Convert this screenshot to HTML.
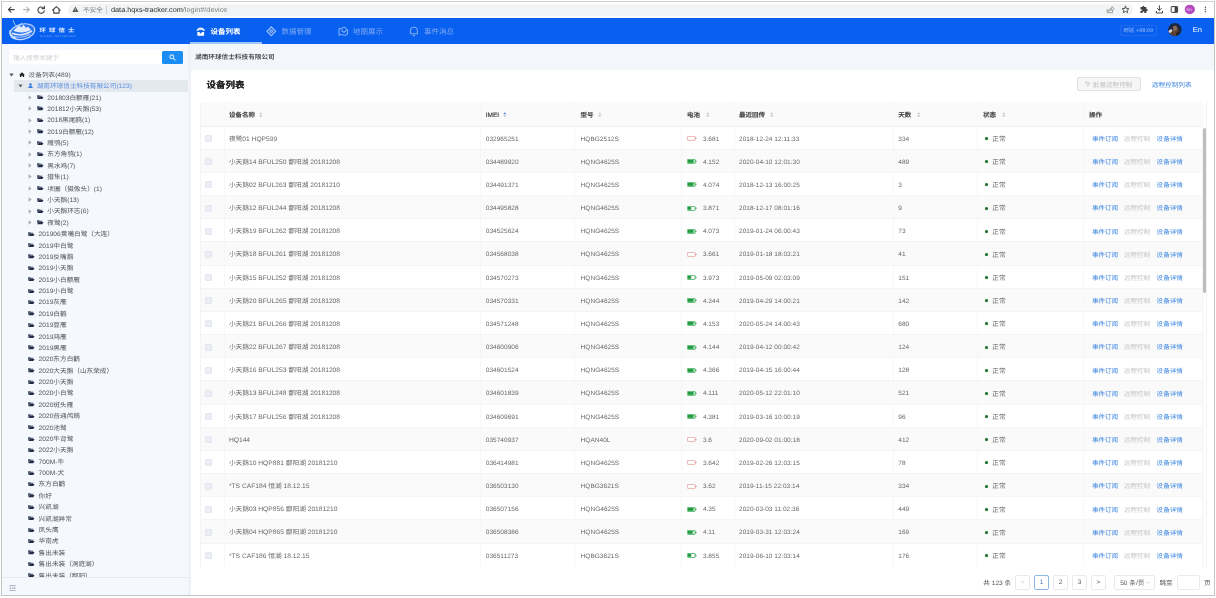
<!DOCTYPE html><html lang="zh-CN"><head><meta charset="utf-8"><title>设备列表</title><style>
*{box-sizing:border-box;margin:0;padding:0}
html,body{width:1216px;height:598px;overflow:hidden;background:#fff}
body{font-family:"Liberation Sans","Noto Sans CJK SC",sans-serif;font-size:6.6px;color:#444;position:relative;filter:blur(.5px);text-rendering:geometricPrecision}
.abs{position:absolute}
.t{position:absolute;white-space:nowrap;line-height:10px;height:10px}
#frame{position:absolute;left:1px;top:1px;width:1214px;height:595px;border:1px solid #c4c4c4;overflow:hidden;background:#fff}
#chrome{position:absolute;left:0;top:0;width:1216px;height:18px;background:#fff}
#omni{position:absolute;left:67.500px;top:3.800px;width:1065.500px;height:12.200px;border-radius:6.100px;background:#f1f3f4}
#hdr{position:absolute;left:2px;top:18px;width:1212px;height:25.5px;background:#0860f0}
#side{position:absolute;left:2px;top:43.5px;width:186px;height:552px;background:#f5f8fd;overflow:hidden}
#sideline{position:absolute;left:188px;top:43.5px;width:2.6px;height:552px;background:#eff3f9}
#crumb{position:absolute;left:190.6px;top:43.5px;width:1023.4px;height:26.5px;background:#f3f7fc}
#card{position:absolute;left:190.6px;top:70px;width:1023.4px;height:526px;background:#fff}
.tree{margin-top:1px;position:absolute;left:0;height:11.36px;line-height:11.36px;white-space:nowrap;color:#50555f;font-size:6.65px}
.row{position:absolute;left:200px;width:1002px;height:23.17px;border-bottom:1px solid #f4f4f4}
.row.alt{background:#fafafa}
.cell{margin-top:1px;position:absolute;top:0;height:23.5px;line-height:23.5px;white-space:nowrap;font-size:6.55px;color:#6a6a6a}
.vl{position:absolute;width:1px;background:#f7f7f7}
.th{margin-top:1.5px;position:absolute;top:0;height:24px;line-height:24px;white-space:nowrap;font-size:6.5px;color:#333;font-weight:500;-webkit-text-stroke:.18px #444}
.t,.tree,.cell,.th{transform:scaleY(.96)}
.lnk{color:#3b86e0}
.cj{top:.25px}
.dis{color:#c4c4c4}
.pg{position:absolute;top:575.2px;height:14.4px;border:1px solid #eaeaea;border-radius:2px;background:#fff;text-align:center;line-height:13.2px;font-size:6.6px;color:#606060}
</style></head><body>
<div id="chrome">
<div id="omni"></div>
<svg class="abs" style="left:6px;top:4px" width="60" height="12" viewBox="0 0 60 12" fill="none" stroke="#444" stroke-width="1.1" stroke-linecap="round" stroke-linejoin="round">
<path d="M8.2 5.6H2.6M5 3.1L2.4 5.6L5 8.1"/>
<path d="M17.6 5.6h5.6M20.8 3.1l2.6 2.5l-2.6 2.5" stroke="#b5b5b5"/>
<g transform="translate(-2.6 0)"><path d="M40.3 4.2A3.200 3.200 0 1 0 40.9 6.800"/><path d="M41 2.200v2.400h-2.400" /></g>
<g transform="translate(-4.6 0)"><path d="M51.200 6.200L55 2.600l3.800 3.600M52.300 5.400v3.700h5.400V5.400"/></g>
</svg>
<svg class="abs" style="left:72.200px;top:6.400px" width="6.800" height="6.200" viewBox="0 0 9 8.400" preserveAspectRatio="none"><path d="M4.5 0.8L8.6 8H0.4Z" fill="#5a5a5a"/><path d="M4.5 3.4v2.4M4.5 6.6v.6" stroke="#f1f3f4" stroke-width=".8"/></svg>
<div class="t" style="left:83px;top:5.5px;font-size:6.6px;color:#777">不安全</div>
<div class="abs" style="left:105.700px;top:5.500px;width:1px;height:8px;background:#cfcfcf"></div>
<div class="t" style="left:111px;top:4.5px;font-size:7.300px;color:#2a2a2a">data.hqxs-tracker.com<span style="color:#808080">/login#/device</span></div>
<svg class="abs" style="left:1104px;top:3px" width="108" height="13" viewBox="0 0 108 13" fill="none" stroke-linecap="round" stroke-linejoin="round">
<g stroke="#8a8a8a" stroke-width=".8"><path d="M3.2 6.3v3.4h5.4V7.6M4.6 8.2c.3-2 1.6-3 3.4-3.1V3.6L10.2 5.8 8 7.9V6.6C6.600 6.600 5.500 7.100 4.600 8.200Z"/></g>
<path d="M21.5 3.3l1 2.200 2.400.25-1.800 1.600.5 2.350-2.100-1.250-2.100 1.250.5-2.350-1.800-1.600 2.400-.25Z" stroke="#444" stroke-width=".9"/>
<g transform="translate(35.700 2.300) scale(.355)"><path d="M20.500 11H19V7c0-1.100-.9-2-2-2h-4V3.500C13 2.120 11.880 1 10.500 1S8 2.120 8 3.500V5H4c-1.100 0-1.990.9-1.990 2v3.800H3.500c1.490 0 2.700 1.210 2.700 2.700s-1.210 2.700-2.700 2.700H2V20c0 1.100.9 2 2 2h3.800v-1.500c0-1.490 1.210-2.700 2.700-2.700 1.490 0 2.700 1.210 2.700 2.700V22H17c1.100 0 2-.9 2-2v-4h1.500c1.380 0 2.500-1.120 2.500-2.500S21.880 11 20.500 11z" fill="#444"/></g>
<path d="M55.400 2.800v4.400M53.500 5.500l1.900 1.900 1.900-1.900M52.300 8.300v1.700h6.200V8.300" stroke="#444" stroke-width="1"/>
<rect x="67.200" y="3.600" width="6.400" height="5.800" rx=".8" stroke="#444" stroke-width="1"/><rect x="70.600" y="3.600" width="3" height="5.800" fill="#444"/>
<ellipse cx="85.800" cy="6.400" rx="5.100" ry="4.750" fill="#b44ac0"/>
<circle cx="101.400" cy="4.200" r=".75" fill="#555"/><circle cx="101.400" cy="6.500" r=".75" fill="#555"/><circle cx="101.400" cy="8.800" r=".75" fill="#555"/>
</svg>
<div class="t" style="left:1186.500px;top:4.500px;font-size:4.600px;color:#f3d8f5;letter-spacing:0">hn</div>
</div>
<div id="hdr"></div>
<svg class="abs" style="left:4px;top:16px" width="36" height="30" viewBox="0 0 36 30" fill="none">
<ellipse cx="18.400" cy="15.700" rx="12.500" ry="7.600" transform="rotate(-13 18.4 15.7)" fill="#2a74f2" stroke="#c4d9fb" stroke-width="1.200"/>
<path d="M9.500 14.800c2-2.600 4-4.300 6.200-5.300l1.500 2.100 2.300-2.900 2.500 3.300 1.900-1.500 3.100 3.600c-5 2.600-12 3.400-17.500.7Z" fill="#e2ecfd"/>
<path d="M8 17.300c5.500 2.300 13 1.700 20-2.300" stroke="#dce8fc" stroke-width="1.500"/>
<path d="M9.600 20.300c5 1.700 11 1 16.500-2.100" stroke="#a9c6f9" stroke-width="1.100"/>
<path d="M6.300 14.200c-1 3.800 1.400 7.200 6 8.300" stroke="#cfe0fb" stroke-width="1.700"/>
<path d="M9.200 4.300c.6 3.200 2 5 4.400 6.800M18.400 7.200c-1.800.8-3.400 2-4.800 3.900" stroke="#c4d9fb" stroke-width=".9"/>
</svg>
<div class="t" style="left:39.600px;top:26px;font-size:6.400px;font-weight:900;color:#d3e3fc;letter-spacing:3.100px;transform:scaleY(.82);transform-origin:0 50%">环球信士</div>
<div class="t" style="left:39.800px;top:33.500px;font-size:2.700px;color:#78a5f6;letter-spacing:.480px;line-height:6px;height:6px">GLOBAL MESSENGER</div>
<div class="abs" style="left:190px;top:41.700px;width:71.800px;height:2.300px;background:#a0c5fa"></div>
<svg class="abs" style="left:195.600px;top:26.600px" width="9.400" height="9.400" viewBox="0 0 10 10"><path d="M.6 4.200C.6 2 2.500.6 5 .6S9.400 2 9.400 4.200L7.600 4.200 7 3.200H3L2.400 4.200Z" fill="#dce8fd"/><path d="M1.400 5.300H8.600V8.900a.5.500 0 0 1-.5.500H1.900a.5.500 0 0 1-.5-.5Z" fill="#fff"/><rect x="4" y="5.300" width="2" height="1.500" fill="#0860f0"/></svg>
<div class="t" style="left:210.600px;top:27.300px;font-size:7.500px;font-weight:700;color:#fff">设备列表</div>
<svg class="abs" style="left:266px;top:26.300px" width="10.600" height="10.600" viewBox="0 0 10.600 10.600" fill="none" stroke="#98bbf8" stroke-width="1.250"><path d="M5.300 1L9.600 5.300 5.300 9.600 1 5.300Z"/><circle cx="5.300" cy="5.300" r="1.200"/></svg>
<div class="t" style="left:281.600px;top:27.300px;font-size:7.500px;color:#7fa9f5">数据管理</div>
<svg class="abs" style="left:337.800px;top:26.300px" width="10.400" height="10.400" viewBox="0 0 10.400 10.400" fill="none" stroke="#8fb4f6" stroke-width="1" stroke-linejoin="round"><path d="M3 2.400H1V9.400L3.600 8.400 6.800 9.400 9.400 8.400V3.200"/><circle cx="6" cy="3.600" r="2.400"/><path d="M6 6v1"/></svg>
<div class="t" style="left:352.900px;top:27.300px;font-size:7.500px;color:#7fa9f5">地图展示</div>
<svg class="abs" style="left:409.300px;top:26.200px" width="9.800" height="10.600" viewBox="0 0 9.800 10.600" fill="none" stroke="#8fb4f6" stroke-width="1" stroke-linejoin="round"><path d="M1.400 7.800V4.600a3.500 3.500 0 0 1 7 0V7.800Z"/><path d="M3.800 9.600h2.200"/></svg>
<div class="t" style="left:424.100px;top:27.300px;font-size:7.500px;color:#7fa9f5">事件消息</div>
<div class="abs" style="left:1120.200px;top:25.100px;width:37.300px;height:10.700px;border:1px solid #2468ee;border-radius:1px"></div>
<div class="t" style="left:1123.400px;top:25.500px;font-size:5.500px;font-weight:700;color:#7aa6f6">时区 +08:00</div>
<svg class="abs" style="left:1168.100px;top:22.900px" width="13.800" height="13.100" viewBox="0 0 14 14" preserveAspectRatio="none"><defs><clipPath id="av"><circle cx="7" cy="7" r="6.900"/></clipPath></defs><g clip-path="url(#av)"><rect width="14" height="14" fill="#1c2746"/><path d="M0 9l3-2 2 1 2-4 3 1 1 5-2 4H3Z" fill="#5a4030"/><path d="M5 4.500c1-2 3.500-2 4.200 0l-.5 3.500-3 .5Z" fill="#8a6a50"/><path d="M0 8.500l3.500-2 1 2L2 11Z" fill="#d8d8e0"/><path d="M9 9l2.500 1.500L12 14H8Z" fill="#222"/></g></svg>
<div class="t" style="left:1192.800px;top:25px;font-size:7.600px;color:#fff">En</div>
<div id="side">
<div class="abs" style="left:6.500px;top:6.500px;width:153px;height:13.800px;background:#fff;border-radius:1.500px 0 0 1.500px"></div>
<div class="t" style="left:11.200px;top:10.400px;font-size:6.500px;color:#cdd0d5">输入搜索关键字</div>
<div class="abs" style="left:159.500px;top:7px;width:21.600px;height:13.800px;background:#1b8df4;border-radius:1.500px"></div>
<svg class="abs" style="left:166.800px;top:10.600px" width="7" height="7" viewBox="0 0 7 7" fill="none" stroke="#cfe6fd" stroke-width="1.100" stroke-linecap="round"><circle cx="2.800" cy="2.800" r="1.900"/><path d="M4.300 4.300L6.200 6.200"/></svg>
<div class="abs" style="left:11.500px;top:36.600px;width:175px;height:11.600px;background:#e4e8ef"></div>
<svg class="abs" style="left:6.9px;top:29.0px" width="5" height="4" viewBox="0 0 5 4"><path d="M.3.600h4.400L2.500 3.600Z" fill="#555"/></svg>
<svg class="abs" style="left:16.7px;top:28.1px" width="6" height="5.600" viewBox="0 0 6 5.600"><path d="M3 .2L5.900 2.900H5.100V5.400H3.700V3.700H2.300V5.400H.9V2.900H.1Z" fill="#222"/></svg>
<div class="tree" style="left:26.6px;top:25.31px">设备列表(489)</div>
<svg class="abs" style="left:16.0px;top:40.4px" width="5" height="4" viewBox="0 0 5 4"><path d="M.3.600h4.400L2.500 3.600Z" fill="#666"/></svg>
<svg class="abs" style="left:26.2px;top:39.5px" width="5" height="5.400" viewBox="0 0 5 5.400"><circle cx="2.500" cy="1.500" r="1.300" fill="#3b7de0"/><path d="M.2 5.300C.2 3.600 1.200 3 2.500 3S4.800 3.600 4.800 5.300Z" fill="#3b7de0"/></svg>
<div class="tree" style="left:34.7px;top:36.69px;color:#5b8fe0">湖南环球信士科技有限公司(123)</div>
<svg class="abs" style="left:25.5px;top:51.3px" width="4" height="5" viewBox="0 0 4 5"><path d="M.600.300v4.400L3.600 2.500Z" fill="#a9adb5"/></svg>
<svg class="abs" style="left:35.3px;top:51.6px" width="6.600" height="4.400" viewBox="0 0 6.600 4.400"><path d="M.2.200h1.900l.6.600h2.600v.9H1.500L.2 3.700Z" fill="#2f3a55"/><path d="M1.600 1.900h4.900L5.300 4.200H.3Z" fill="#232d47"/></svg>
<div class="tree" style="left:45.3px;top:48.07px">201803白额雁(21)</div>
<svg class="abs" style="left:25.5px;top:62.6px" width="4" height="5" viewBox="0 0 4 5"><path d="M.600.300v4.400L3.600 2.500Z" fill="#a9adb5"/></svg>
<svg class="abs" style="left:35.3px;top:62.9px" width="6.600" height="4.400" viewBox="0 0 6.600 4.400"><path d="M.2.200h1.900l.6.600h2.600v.9H1.500L.2 3.700Z" fill="#2f3a55"/><path d="M1.600 1.900h4.900L5.300 4.200H.3Z" fill="#232d47"/></svg>
<div class="tree" style="left:45.3px;top:59.45px">201812小天鹅(53)</div>
<svg class="abs" style="left:25.5px;top:74.0px" width="4" height="5" viewBox="0 0 4 5"><path d="M.600.300v4.400L3.600 2.500Z" fill="#a9adb5"/></svg>
<svg class="abs" style="left:35.3px;top:74.3px" width="6.600" height="4.400" viewBox="0 0 6.600 4.400"><path d="M.2.200h1.900l.6.600h2.600v.9H1.500L.2 3.700Z" fill="#2f3a55"/><path d="M1.600 1.900h4.900L5.300 4.200H.3Z" fill="#232d47"/></svg>
<div class="tree" style="left:45.3px;top:70.83px">2018黑尾鸥(1)</div>
<svg class="abs" style="left:25.5px;top:85.4px" width="4" height="5" viewBox="0 0 4 5"><path d="M.600.300v4.400L3.600 2.500Z" fill="#a9adb5"/></svg>
<svg class="abs" style="left:35.3px;top:85.7px" width="6.600" height="4.400" viewBox="0 0 6.600 4.400"><path d="M.2.200h1.900l.6.600h2.600v.9H1.500L.2 3.700Z" fill="#2f3a55"/><path d="M1.600 1.900h4.900L5.300 4.200H.3Z" fill="#232d47"/></svg>
<div class="tree" style="left:45.3px;top:82.21px">2019白额雁(12)</div>
<svg class="abs" style="left:25.5px;top:96.8px" width="4" height="5" viewBox="0 0 4 5"><path d="M.600.300v4.400L3.600 2.500Z" fill="#a9adb5"/></svg>
<svg class="abs" style="left:35.3px;top:97.1px" width="6.600" height="4.400" viewBox="0 0 6.600 4.400"><path d="M.2.200h1.900l.6.600h2.600v.9H1.500L.2 3.700Z" fill="#2f3a55"/><path d="M1.600 1.900h4.900L5.300 4.200H.3Z" fill="#232d47"/></svg>
<div class="tree" style="left:45.3px;top:93.59px">雕鸮(5)</div>
<svg class="abs" style="left:25.5px;top:108.2px" width="4" height="5" viewBox="0 0 4 5"><path d="M.600.300v4.400L3.600 2.500Z" fill="#a9adb5"/></svg>
<svg class="abs" style="left:35.3px;top:108.5px" width="6.600" height="4.400" viewBox="0 0 6.600 4.400"><path d="M.2.200h1.900l.6.600h2.600v.9H1.500L.2 3.700Z" fill="#2f3a55"/><path d="M1.600 1.900h4.900L5.300 4.200H.3Z" fill="#232d47"/></svg>
<div class="tree" style="left:45.3px;top:104.97px">东方角鸮(1)</div>
<svg class="abs" style="left:25.5px;top:119.5px" width="4" height="5" viewBox="0 0 4 5"><path d="M.600.300v4.400L3.600 2.500Z" fill="#a9adb5"/></svg>
<svg class="abs" style="left:35.3px;top:119.8px" width="6.600" height="4.400" viewBox="0 0 6.600 4.400"><path d="M.2.200h1.900l.6.600h2.600v.9H1.500L.2 3.700Z" fill="#2f3a55"/><path d="M1.600 1.900h4.900L5.300 4.200H.3Z" fill="#232d47"/></svg>
<div class="tree" style="left:45.3px;top:116.35px">黑水鸡(7)</div>
<svg class="abs" style="left:25.5px;top:130.9px" width="4" height="5" viewBox="0 0 4 5"><path d="M.600.300v4.400L3.600 2.500Z" fill="#a9adb5"/></svg>
<svg class="abs" style="left:35.3px;top:131.2px" width="6.600" height="4.400" viewBox="0 0 6.600 4.400"><path d="M.2.200h1.900l.6.600h2.600v.9H1.500L.2 3.700Z" fill="#2f3a55"/><path d="M1.600 1.900h4.900L5.300 4.200H.3Z" fill="#232d47"/></svg>
<div class="tree" style="left:45.3px;top:127.73px">猎隼(1)</div>
<svg class="abs" style="left:25.5px;top:142.3px" width="4" height="5" viewBox="0 0 4 5"><path d="M.600.300v4.400L3.600 2.500Z" fill="#a9adb5"/></svg>
<svg class="abs" style="left:35.3px;top:142.6px" width="6.600" height="4.400" viewBox="0 0 6.600 4.400"><path d="M.2.200h1.900l.6.600h2.600v.9H1.500L.2 3.700Z" fill="#2f3a55"/><path d="M1.600 1.900h4.900L5.300 4.200H.3Z" fill="#232d47"/></svg>
<div class="tree" style="left:45.3px;top:139.11px">项圈（摄像头）(1)</div>
<svg class="abs" style="left:25.5px;top:153.7px" width="4" height="5" viewBox="0 0 4 5"><path d="M.600.300v4.400L3.600 2.500Z" fill="#a9adb5"/></svg>
<svg class="abs" style="left:35.3px;top:154.0px" width="6.600" height="4.400" viewBox="0 0 6.600 4.400"><path d="M.2.200h1.900l.6.600h2.600v.9H1.500L.2 3.700Z" fill="#2f3a55"/><path d="M1.600 1.900h4.900L5.300 4.200H.3Z" fill="#232d47"/></svg>
<div class="tree" style="left:45.3px;top:150.49px">小天鹅(13)</div>
<svg class="abs" style="left:25.5px;top:165.1px" width="4" height="5" viewBox="0 0 4 5"><path d="M.600.300v4.400L3.600 2.500Z" fill="#a9adb5"/></svg>
<svg class="abs" style="left:35.3px;top:165.4px" width="6.600" height="4.400" viewBox="0 0 6.600 4.400"><path d="M.2.200h1.900l.6.600h2.600v.9H1.500L.2 3.700Z" fill="#2f3a55"/><path d="M1.600 1.900h4.900L5.300 4.200H.3Z" fill="#232d47"/></svg>
<div class="tree" style="left:45.3px;top:161.87px">小天鹅环志(6)</div>
<svg class="abs" style="left:25.5px;top:176.4px" width="4" height="5" viewBox="0 0 4 5"><path d="M.600.300v4.400L3.600 2.500Z" fill="#a9adb5"/></svg>
<svg class="abs" style="left:35.3px;top:176.7px" width="6.600" height="4.400" viewBox="0 0 6.600 4.400"><path d="M.2.200h1.900l.6.600h2.600v.9H1.500L.2 3.700Z" fill="#2f3a55"/><path d="M1.600 1.900h4.900L5.300 4.200H.3Z" fill="#232d47"/></svg>
<div class="tree" style="left:45.3px;top:173.25px">夜鹭(2)</div>
<svg class="abs" style="left:26.3px;top:188.1px" width="6.600" height="4.400" viewBox="0 0 6.600 4.400"><path d="M.2.200h1.900l.6.600h2.600v.9H1.500L.2 3.700Z" fill="#2f3a55"/><path d="M1.600 1.900h4.900L5.300 4.200H.3Z" fill="#232d47"/></svg>
<div class="tree" style="left:36.6px;top:184.63px">201906黄嘴白鹭（大连）</div>
<svg class="abs" style="left:26.3px;top:199.5px" width="6.600" height="4.400" viewBox="0 0 6.600 4.400"><path d="M.2.200h1.900l.6.600h2.600v.9H1.500L.2 3.700Z" fill="#2f3a55"/><path d="M1.600 1.900h4.900L5.300 4.200H.3Z" fill="#232d47"/></svg>
<div class="tree" style="left:36.6px;top:196.01px">2019中白鹭</div>
<svg class="abs" style="left:26.3px;top:210.9px" width="6.600" height="4.400" viewBox="0 0 6.600 4.400"><path d="M.2.200h1.900l.6.600h2.600v.9H1.500L.2 3.700Z" fill="#2f3a55"/><path d="M1.600 1.900h4.900L5.300 4.200H.3Z" fill="#232d47"/></svg>
<div class="tree" style="left:36.6px;top:207.39px">2019反嘴鹬</div>
<svg class="abs" style="left:26.3px;top:222.3px" width="6.600" height="4.400" viewBox="0 0 6.600 4.400"><path d="M.2.200h1.900l.6.600h2.600v.9H1.500L.2 3.700Z" fill="#2f3a55"/><path d="M1.600 1.900h4.900L5.300 4.200H.3Z" fill="#232d47"/></svg>
<div class="tree" style="left:36.6px;top:218.77px">2019小天鹅</div>
<svg class="abs" style="left:26.3px;top:233.6px" width="6.600" height="4.400" viewBox="0 0 6.600 4.400"><path d="M.2.200h1.900l.6.600h2.600v.9H1.500L.2 3.700Z" fill="#2f3a55"/><path d="M1.600 1.900h4.900L5.300 4.200H.3Z" fill="#232d47"/></svg>
<div class="tree" style="left:36.6px;top:230.15px">2019小白额雁</div>
<svg class="abs" style="left:26.3px;top:245.0px" width="6.600" height="4.400" viewBox="0 0 6.600 4.400"><path d="M.2.200h1.900l.6.600h2.600v.9H1.500L.2 3.700Z" fill="#2f3a55"/><path d="M1.600 1.900h4.900L5.300 4.200H.3Z" fill="#232d47"/></svg>
<div class="tree" style="left:36.6px;top:241.53px">2019小白鹭</div>
<svg class="abs" style="left:26.3px;top:256.4px" width="6.600" height="4.400" viewBox="0 0 6.600 4.400"><path d="M.2.200h1.900l.6.600h2.600v.9H1.500L.2 3.700Z" fill="#2f3a55"/><path d="M1.600 1.900h4.900L5.300 4.200H.3Z" fill="#232d47"/></svg>
<div class="tree" style="left:36.6px;top:252.91px">2019灰雁</div>
<svg class="abs" style="left:26.3px;top:267.8px" width="6.600" height="4.400" viewBox="0 0 6.600 4.400"><path d="M.2.200h1.900l.6.600h2.600v.9H1.500L.2 3.700Z" fill="#2f3a55"/><path d="M1.600 1.900h4.900L5.300 4.200H.3Z" fill="#232d47"/></svg>
<div class="tree" style="left:36.6px;top:264.29px">2019白鹤</div>
<svg class="abs" style="left:26.3px;top:279.2px" width="6.600" height="4.400" viewBox="0 0 6.600 4.400"><path d="M.2.200h1.900l.6.600h2.600v.9H1.500L.2 3.700Z" fill="#2f3a55"/><path d="M1.600 1.900h4.900L5.300 4.200H.3Z" fill="#232d47"/></svg>
<div class="tree" style="left:36.6px;top:275.67px">2019豆雁</div>
<svg class="abs" style="left:26.3px;top:290.5px" width="6.600" height="4.400" viewBox="0 0 6.600 4.400"><path d="M.2.200h1.900l.6.600h2.600v.9H1.500L.2 3.700Z" fill="#2f3a55"/><path d="M1.600 1.900h4.900L5.300 4.200H.3Z" fill="#232d47"/></svg>
<div class="tree" style="left:36.6px;top:287.05px">2019鸿雁</div>
<svg class="abs" style="left:26.3px;top:301.9px" width="6.600" height="4.400" viewBox="0 0 6.600 4.400"><path d="M.2.200h1.900l.6.600h2.600v.9H1.500L.2 3.700Z" fill="#2f3a55"/><path d="M1.600 1.900h4.900L5.300 4.200H.3Z" fill="#232d47"/></svg>
<div class="tree" style="left:36.6px;top:298.43px">2019黑雁</div>
<svg class="abs" style="left:26.3px;top:313.3px" width="6.600" height="4.400" viewBox="0 0 6.600 4.400"><path d="M.2.200h1.900l.6.600h2.600v.9H1.500L.2 3.700Z" fill="#2f3a55"/><path d="M1.600 1.900h4.900L5.300 4.200H.3Z" fill="#232d47"/></svg>
<div class="tree" style="left:36.6px;top:309.81px">2020东方白鹳</div>
<svg class="abs" style="left:26.3px;top:324.7px" width="6.600" height="4.400" viewBox="0 0 6.600 4.400"><path d="M.2.200h1.900l.6.600h2.600v.9H1.500L.2 3.700Z" fill="#2f3a55"/><path d="M1.600 1.900h4.900L5.300 4.200H.3Z" fill="#232d47"/></svg>
<div class="tree" style="left:36.6px;top:321.19px">2020大天鹅（山东荣成）</div>
<svg class="abs" style="left:26.3px;top:336.1px" width="6.600" height="4.400" viewBox="0 0 6.600 4.400"><path d="M.2.200h1.900l.6.600h2.600v.9H1.500L.2 3.700Z" fill="#2f3a55"/><path d="M1.600 1.900h4.900L5.300 4.200H.3Z" fill="#232d47"/></svg>
<div class="tree" style="left:36.6px;top:332.57px">2020小天鹅</div>
<svg class="abs" style="left:26.3px;top:347.4px" width="6.600" height="4.400" viewBox="0 0 6.600 4.400"><path d="M.2.200h1.900l.6.600h2.600v.9H1.500L.2 3.700Z" fill="#2f3a55"/><path d="M1.600 1.900h4.900L5.300 4.200H.3Z" fill="#232d47"/></svg>
<div class="tree" style="left:36.6px;top:343.95px">2020小白鹭</div>
<svg class="abs" style="left:26.3px;top:358.8px" width="6.600" height="4.400" viewBox="0 0 6.600 4.400"><path d="M.2.200h1.900l.6.600h2.600v.9H1.500L.2 3.700Z" fill="#2f3a55"/><path d="M1.600 1.900h4.900L5.300 4.200H.3Z" fill="#232d47"/></svg>
<div class="tree" style="left:36.6px;top:355.33px">2020斑头雁</div>
<svg class="abs" style="left:26.3px;top:370.2px" width="6.600" height="4.400" viewBox="0 0 6.600 4.400"><path d="M.2.200h1.900l.6.600h2.600v.9H1.500L.2 3.700Z" fill="#2f3a55"/><path d="M1.600 1.900h4.900L5.300 4.200H.3Z" fill="#232d47"/></svg>
<div class="tree" style="left:36.6px;top:366.71px">2020普通鸬鹚</div>
<svg class="abs" style="left:26.3px;top:381.6px" width="6.600" height="4.400" viewBox="0 0 6.600 4.400"><path d="M.2.200h1.900l.6.600h2.600v.9H1.500L.2 3.700Z" fill="#2f3a55"/><path d="M1.600 1.900h4.900L5.300 4.200H.3Z" fill="#232d47"/></svg>
<div class="tree" style="left:36.6px;top:378.09px">2020池鹭</div>
<svg class="abs" style="left:26.3px;top:393.0px" width="6.600" height="4.400" viewBox="0 0 6.600 4.400"><path d="M.2.200h1.900l.6.600h2.600v.9H1.500L.2 3.700Z" fill="#2f3a55"/><path d="M1.600 1.900h4.900L5.300 4.200H.3Z" fill="#232d47"/></svg>
<div class="tree" style="left:36.6px;top:389.47px">2020牛背鹭</div>
<svg class="abs" style="left:26.3px;top:404.3px" width="6.600" height="4.400" viewBox="0 0 6.600 4.400"><path d="M.2.200h1.900l.6.600h2.600v.9H1.500L.2 3.700Z" fill="#2f3a55"/><path d="M1.600 1.900h4.900L5.300 4.200H.3Z" fill="#232d47"/></svg>
<div class="tree" style="left:36.6px;top:400.85px">2022小天鹅</div>
<svg class="abs" style="left:26.3px;top:415.7px" width="6.600" height="4.400" viewBox="0 0 6.600 4.400"><path d="M.2.200h1.900l.6.600h2.600v.9H1.500L.2 3.700Z" fill="#2f3a55"/><path d="M1.600 1.900h4.900L5.300 4.200H.3Z" fill="#232d47"/></svg>
<div class="tree" style="left:36.6px;top:412.23px">700M-牛</div>
<svg class="abs" style="left:26.3px;top:427.1px" width="6.600" height="4.400" viewBox="0 0 6.600 4.400"><path d="M.2.200h1.900l.6.600h2.600v.9H1.500L.2 3.700Z" fill="#2f3a55"/><path d="M1.600 1.900h4.900L5.300 4.200H.3Z" fill="#232d47"/></svg>
<div class="tree" style="left:36.6px;top:423.61px">700M-犬</div>
<svg class="abs" style="left:26.3px;top:438.5px" width="6.600" height="4.400" viewBox="0 0 6.600 4.400"><path d="M.2.200h1.900l.6.600h2.600v.9H1.500L.2 3.700Z" fill="#2f3a55"/><path d="M1.600 1.900h4.900L5.300 4.200H.3Z" fill="#232d47"/></svg>
<div class="tree" style="left:36.6px;top:434.99px">东方白鹳</div>
<svg class="abs" style="left:26.3px;top:449.9px" width="6.600" height="4.400" viewBox="0 0 6.600 4.400"><path d="M.2.200h1.900l.6.600h2.600v.9H1.500L.2 3.700Z" fill="#2f3a55"/><path d="M1.600 1.900h4.900L5.300 4.200H.3Z" fill="#232d47"/></svg>
<div class="tree" style="left:36.6px;top:446.37px">你好</div>
<svg class="abs" style="left:26.3px;top:461.2px" width="6.600" height="4.400" viewBox="0 0 6.600 4.400"><path d="M.2.200h1.900l.6.600h2.600v.9H1.500L.2 3.700Z" fill="#2f3a55"/><path d="M1.600 1.900h4.900L5.300 4.200H.3Z" fill="#232d47"/></svg>
<div class="tree" style="left:36.6px;top:457.75px">兴凯湖</div>
<svg class="abs" style="left:26.3px;top:472.6px" width="6.600" height="4.400" viewBox="0 0 6.600 4.400"><path d="M.2.200h1.900l.6.600h2.600v.9H1.500L.2 3.700Z" fill="#2f3a55"/><path d="M1.600 1.900h4.900L5.300 4.200H.3Z" fill="#232d47"/></svg>
<div class="tree" style="left:36.6px;top:469.13px">兴凯湖异常</div>
<svg class="abs" style="left:26.3px;top:484.0px" width="6.600" height="4.400" viewBox="0 0 6.600 4.400"><path d="M.2.200h1.900l.6.600h2.600v.9H1.500L.2 3.700Z" fill="#2f3a55"/><path d="M1.600 1.900h4.900L5.300 4.200H.3Z" fill="#232d47"/></svg>
<div class="tree" style="left:36.6px;top:480.51px">凤头鹰</div>
<svg class="abs" style="left:26.3px;top:495.4px" width="6.600" height="4.400" viewBox="0 0 6.600 4.400"><path d="M.2.200h1.900l.6.600h2.600v.9H1.500L.2 3.700Z" fill="#2f3a55"/><path d="M1.600 1.900h4.900L5.300 4.200H.3Z" fill="#232d47"/></svg>
<div class="tree" style="left:36.6px;top:491.89px">华南虎</div>
<svg class="abs" style="left:26.3px;top:506.8px" width="6.600" height="4.400" viewBox="0 0 6.600 4.400"><path d="M.2.200h1.900l.6.600h2.600v.9H1.500L.2 3.700Z" fill="#2f3a55"/><path d="M1.600 1.900h4.900L5.300 4.200H.3Z" fill="#232d47"/></svg>
<div class="tree" style="left:36.6px;top:503.27px">售出未装</div>
<svg class="abs" style="left:26.3px;top:518.1px" width="6.600" height="4.400" viewBox="0 0 6.600 4.400"><path d="M.2.200h1.900l.6.600h2.600v.9H1.500L.2 3.700Z" fill="#2f3a55"/><path d="M1.600 1.900h4.900L5.300 4.200H.3Z" fill="#232d47"/></svg>
<div class="tree" style="left:36.6px;top:514.65px">售出未装（洞庭湖）</div>
<svg class="abs" style="left:26.3px;top:529.5px" width="6.600" height="4.400" viewBox="0 0 6.600 4.400"><path d="M.2.200h1.900l.6.600h2.600v.9H1.500L.2 3.700Z" fill="#2f3a55"/><path d="M1.600 1.900h4.900L5.300 4.200H.3Z" fill="#232d47"/></svg>
<div class="tree" style="left:36.6px;top:526.03px">售出未装（鄱阳）</div>
<div class="abs" style="left:0;top:533.600px;width:186px;height:19px;background:#f5f8fd;border-top:1px solid #e6eaf0"></div>
<svg class="abs" style="left:6.500px;top:541px" width="7" height="6.400" viewBox="0 0 7 6.400" fill="none" stroke="#7d8493" stroke-width=".7"><path d="M.3.700h6.400M2.800 3.200h3.900M.3 5.700h6.400"/><path d="M1.800 2.200L.500 3.200 1.800 4.200Z" fill="#7d8493" stroke="none"/></svg>
</div>
<div id="sideline"></div>
<div id="crumb"></div>
<div class="t" style="left:195px;top:52.650px;font-size:6.650px;color:#2c2c2c;font-weight:500">湖南环球信士科技有限公司</div>
<div id="card"></div>
<div class="t" style="left:206.400px;top:78.700px;font-size:9.500px;font-weight:700;color:#222;line-height:14px;height:14px;text-shadow:0 0 .4px #333">设备列表</div>
<div class="abs" style="left:1076.500px;top:76.900px;width:64px;height:14.400px;background:#f6f6f6;border:1px solid #e0e0e0;border-radius:2px"></div>
<svg class="abs" style="left:1084.600px;top:81.400px" width="5.600" height="5.600" viewBox="0 0 5.600 5.600" fill="none" stroke="#bdbdbd" stroke-width=".7" stroke-linejoin="round"><path d="M.4.800L5.200 2.200 3.400 3.200 2.800 5.200Z"/></svg>
<div class="t" style="left:1092.800px;top:80.600px;font-size:6.600px;color:#c0c0c0">批量远程控制</div>
<div class="t lnk" style="left:1151.800px;top:80.600px;font-size:6.650px">远程控制列表</div>
<div class="abs" style="left:200px;top:102px;width:1003.300px;height:24.600px;background:#fafafa;border-bottom:1px solid #efefef;border-radius:2px 2px 0 0"></div>
<div class="th" style="left:228.9px;top:102px">设备名称</div>
<svg class="abs" style="left:259.1px;top:111.800px" width="3.600" height="5.600" viewBox="0 0 3.600 5.600"><path d="M1.800.2L3.400 2.300H.2Z" fill="#c6c6c6"/><path d="M1.800 5.400L3.400 3.300H.2Z" fill="#c6c6c6"/></svg>
<div class="th" style="left:485.8px;top:102px">IMEI</div>
<svg class="abs" style="left:503.2px;top:111.800px" width="3.600" height="5.600" viewBox="0 0 3.600 5.600"><path d="M1.800.2L3.400 2.300H.2Z" fill="#4b8be6"/><path d="M1.800 5.400L3.400 3.300H.2Z" fill="#c6c6c6"/></svg>
<div class="th" style="left:580.6px;top:102px">型号</div>
<svg class="abs" style="left:598.3px;top:111.800px" width="3.600" height="5.600" viewBox="0 0 3.600 5.600"><path d="M1.800.2L3.400 2.300H.2Z" fill="#c6c6c6"/><path d="M1.800 5.400L3.400 3.300H.2Z" fill="#c6c6c6"/></svg>
<div class="th" style="left:687.0px;top:102px">电池</div>
<svg class="abs" style="left:706.2px;top:111.800px" width="3.600" height="5.600" viewBox="0 0 3.600 5.600"><path d="M1.800.2L3.400 2.300H.2Z" fill="#c6c6c6"/><path d="M1.800 5.400L3.400 3.300H.2Z" fill="#c6c6c6"/></svg>
<div class="th" style="left:739.0px;top:102px">最近回传</div>
<svg class="abs" style="left:769.9px;top:111.800px" width="3.600" height="5.600" viewBox="0 0 3.600 5.600"><path d="M1.800.2L3.400 2.300H.2Z" fill="#c6c6c6"/><path d="M1.800 5.400L3.400 3.300H.2Z" fill="#c6c6c6"/></svg>
<div class="th" style="left:898.3px;top:102px">天数</div>
<svg class="abs" style="left:916.9px;top:111.800px" width="3.600" height="5.600" viewBox="0 0 3.600 5.600"><path d="M1.800.2L3.400 2.300H.2Z" fill="#c6c6c6"/><path d="M1.800 5.400L3.400 3.300H.2Z" fill="#c6c6c6"/></svg>
<div class="th" style="left:983.0px;top:102px">状态</div>
<svg class="abs" style="left:1002.2px;top:111.800px" width="3.600" height="5.600" viewBox="0 0 3.600 5.600"><path d="M1.800.2L3.400 2.300H.2Z" fill="#c6c6c6"/><path d="M1.800 5.400L3.400 3.300H.2Z" fill="#c6c6c6"/></svg>
<div class="th" style="left:1089.0px;top:102px">操作</div>
<div class="row" style="top:126.60px">
<div class="abs" style="left:5px;top:8.20px;width:7px;height:7px;border:1px solid #e3e6f0;background:#eceef5;border-radius:1px"></div>
<div class="cell" style="left:28.900px;font-size:6.700px">夜鹭01 HQP599</div>
<div class="cell" style="left:285.800px">032965251</div>
<div class="cell" style="left:380.600px">HQBG2512S</div>
<svg class="abs" style="left:487px;top:9.40px" width="9.600" height="4.800" viewBox="0 0 9.600 4.800"><rect x=".4" y=".4" width="7.800" height="4" rx=".6" fill="#fff" stroke="#e79999" stroke-width=".75"/><rect x="8.400" y="1.500" width="1" height="1.800" fill="#e58a8a"/></svg>
<div class="cell" style="left:502.900px">3.681</div>
<div class="cell" style="left:539px">2018-12-24 12:11:33</div>
<div class="cell" style="left:698.300px">334</div>
<div class="abs" style="left:785.100px;top:10.00px;width:3.200px;height:3.200px;border-radius:50%;background:#1f6a2b;box-shadow:0 0 1px #7fd08a"></div>
<div class="cell cj" style="left:792.300px;color:#636363;font-size:6.700px">正常</div>
<div class="cell lnk cj" style="left:891.900px">事件订阅</div>
<div class="cell dis cj" style="left:924px">远程控制</div>
<div class="cell lnk cj" style="left:956.600px">设备详情</div>
</div>
<div class="row alt" style="top:149.77px">
<div class="abs" style="left:5px;top:8.03px;width:7px;height:7px;border:1px solid #e3e6f0;background:#eceef5;border-radius:1px"></div>
<div class="cell" style="left:28.900px;font-size:6.700px">小天鹅14 BFUL250 鄱阳湖 20181208</div>
<div class="cell" style="left:285.800px">034489920</div>
<div class="cell" style="left:380.600px">HQNG4625S</div>
<svg class="abs" style="left:487px;top:9.23px" width="9.600" height="4.800" viewBox="0 0 9.600 4.800"><rect x=".4" y=".4" width="7.800" height="4" rx=".6" fill="#fff" stroke="#2fa84f" stroke-width=".8"/><rect x="1" y="1" width="6.600" height="2.800" fill="#8fd6a2" opacity="1"/><rect x="1" y="1" width="5.2" height="2.800" fill="#259a45"/><rect x="8.400" y="1.500" width="1" height="1.800" fill="#2fa84f"/></svg>
<div class="cell" style="left:502.900px">4.152</div>
<div class="cell" style="left:539px">2020-04-10 12:01:30</div>
<div class="cell" style="left:698.300px">489</div>
<div class="abs" style="left:785.100px;top:9.83px;width:3.200px;height:3.200px;border-radius:50%;background:#1f6a2b;box-shadow:0 0 1px #7fd08a"></div>
<div class="cell cj" style="left:792.300px;color:#636363;font-size:6.700px">正常</div>
<div class="cell lnk cj" style="left:891.900px">事件订阅</div>
<div class="cell dis cj" style="left:924px">远程控制</div>
<div class="cell lnk cj" style="left:956.600px">设备详情</div>
</div>
<div class="row" style="top:172.94px">
<div class="abs" style="left:5px;top:7.86px;width:7px;height:7px;border:1px solid #e3e6f0;background:#eceef5;border-radius:1px"></div>
<div class="cell" style="left:28.900px;font-size:6.700px">小天鹅02 BFUL263 鄱阳湖 20181210</div>
<div class="cell" style="left:285.800px">034491371</div>
<div class="cell" style="left:380.600px">HQNG4625S</div>
<svg class="abs" style="left:487px;top:9.06px" width="9.600" height="4.800" viewBox="0 0 9.600 4.800"><rect x=".4" y=".4" width="7.800" height="4" rx=".6" fill="#fff" stroke="#2fa84f" stroke-width=".8"/><rect x="1" y="1" width="6.600" height="2.800" fill="#8fd6a2" opacity="1"/><rect x="1" y="1" width="5.2" height="2.800" fill="#259a45"/><rect x="8.400" y="1.500" width="1" height="1.800" fill="#2fa84f"/></svg>
<div class="cell" style="left:502.900px">4.074</div>
<div class="cell" style="left:539px">2018-12-13 16:00:25</div>
<div class="cell" style="left:698.300px">3</div>
<div class="abs" style="left:785.100px;top:9.66px;width:3.200px;height:3.200px;border-radius:50%;background:#1f6a2b;box-shadow:0 0 1px #7fd08a"></div>
<div class="cell cj" style="left:792.300px;color:#636363;font-size:6.700px">正常</div>
<div class="cell lnk cj" style="left:891.900px">事件订阅</div>
<div class="cell dis cj" style="left:924px">远程控制</div>
<div class="cell lnk cj" style="left:956.600px">设备详情</div>
</div>
<div class="row alt" style="top:196.11px">
<div class="abs" style="left:5px;top:8.69px;width:7px;height:7px;border:1px solid #e3e6f0;background:#eceef5;border-radius:1px"></div>
<div class="cell" style="left:28.900px;font-size:6.700px">小天鹅12 BFUL244 鄱阳湖 20181208</div>
<div class="cell" style="left:285.800px">034495828</div>
<div class="cell" style="left:380.600px">HQNG4625S</div>
<svg class="abs" style="left:487px;top:9.89px" width="9.600" height="4.800" viewBox="0 0 9.600 4.800"><rect x=".4" y=".4" width="7.800" height="4" rx=".6" fill="#fff" stroke="#2fa84f" stroke-width=".8"/><rect x="1" y="1" width="6.600" height="2.800" fill="#8fd6a2" opacity="0"/><rect x="1" y="1" width="3.2" height="2.800" fill="#259a45"/><rect x="8.400" y="1.500" width="1" height="1.800" fill="#2fa84f"/></svg>
<div class="cell" style="left:502.900px">3.871</div>
<div class="cell" style="left:539px">2018-12-17 08:01:16</div>
<div class="cell" style="left:698.300px">9</div>
<div class="abs" style="left:785.100px;top:10.49px;width:3.200px;height:3.200px;border-radius:50%;background:#1f6a2b;box-shadow:0 0 1px #7fd08a"></div>
<div class="cell cj" style="left:792.300px;color:#636363;font-size:6.700px">正常</div>
<div class="cell lnk cj" style="left:891.900px">事件订阅</div>
<div class="cell dis cj" style="left:924px">远程控制</div>
<div class="cell lnk cj" style="left:956.600px">设备详情</div>
</div>
<div class="row" style="top:219.28px">
<div class="abs" style="left:5px;top:8.52px;width:7px;height:7px;border:1px solid #e3e6f0;background:#eceef5;border-radius:1px"></div>
<div class="cell" style="left:28.900px;font-size:6.700px">小天鹅19 BFUL262 鄱阳湖 20181208</div>
<div class="cell" style="left:285.800px">034525624</div>
<div class="cell" style="left:380.600px">HQNG4625S</div>
<svg class="abs" style="left:487px;top:9.72px" width="9.600" height="4.800" viewBox="0 0 9.600 4.800"><rect x=".4" y=".4" width="7.800" height="4" rx=".6" fill="#fff" stroke="#2fa84f" stroke-width=".8"/><rect x="1" y="1" width="6.600" height="2.800" fill="#8fd6a2" opacity="1"/><rect x="1" y="1" width="5.2" height="2.800" fill="#259a45"/><rect x="8.400" y="1.500" width="1" height="1.800" fill="#2fa84f"/></svg>
<div class="cell" style="left:502.900px">4.073</div>
<div class="cell" style="left:539px">2019-01-24 06:00:43</div>
<div class="cell" style="left:698.300px">73</div>
<div class="abs" style="left:785.100px;top:10.32px;width:3.200px;height:3.200px;border-radius:50%;background:#1f6a2b;box-shadow:0 0 1px #7fd08a"></div>
<div class="cell cj" style="left:792.300px;color:#636363;font-size:6.700px">正常</div>
<div class="cell lnk cj" style="left:891.900px">事件订阅</div>
<div class="cell dis cj" style="left:924px">远程控制</div>
<div class="cell lnk cj" style="left:956.600px">设备详情</div>
</div>
<div class="row alt" style="top:242.45px">
<div class="abs" style="left:5px;top:8.35px;width:7px;height:7px;border:1px solid #e3e6f0;background:#eceef5;border-radius:1px"></div>
<div class="cell" style="left:28.900px;font-size:6.700px">小天鹅18 BFUL261 鄱阳湖 20181208</div>
<div class="cell" style="left:285.800px">034568038</div>
<div class="cell" style="left:380.600px">HQNG4625S</div>
<svg class="abs" style="left:487px;top:9.55px" width="9.600" height="4.800" viewBox="0 0 9.600 4.800"><rect x=".4" y=".4" width="7.800" height="4" rx=".6" fill="#fff" stroke="#e79999" stroke-width=".75"/><rect x="8.400" y="1.500" width="1" height="1.800" fill="#e58a8a"/></svg>
<div class="cell" style="left:502.900px">3.661</div>
<div class="cell" style="left:539px">2019-01-18 18:03:21</div>
<div class="cell" style="left:698.300px">41</div>
<div class="abs" style="left:785.100px;top:10.15px;width:3.200px;height:3.200px;border-radius:50%;background:#1f6a2b;box-shadow:0 0 1px #7fd08a"></div>
<div class="cell cj" style="left:792.300px;color:#636363;font-size:6.700px">正常</div>
<div class="cell lnk cj" style="left:891.900px">事件订阅</div>
<div class="cell dis cj" style="left:924px">远程控制</div>
<div class="cell lnk cj" style="left:956.600px">设备详情</div>
</div>
<div class="row" style="top:265.62px">
<div class="abs" style="left:5px;top:8.18px;width:7px;height:7px;border:1px solid #e3e6f0;background:#eceef5;border-radius:1px"></div>
<div class="cell" style="left:28.900px;font-size:6.700px">小天鹅15 BFUL252 鄱阳湖 20181208</div>
<div class="cell" style="left:285.800px">034570273</div>
<div class="cell" style="left:380.600px">HQNG4625S</div>
<svg class="abs" style="left:487px;top:9.38px" width="9.600" height="4.800" viewBox="0 0 9.600 4.800"><rect x=".4" y=".4" width="7.800" height="4" rx=".6" fill="#fff" stroke="#2fa84f" stroke-width=".8"/><rect x="1" y="1" width="6.600" height="2.800" fill="#8fd6a2" opacity="0"/><rect x="1" y="1" width="3.2" height="2.800" fill="#259a45"/><rect x="8.400" y="1.500" width="1" height="1.800" fill="#2fa84f"/></svg>
<div class="cell" style="left:502.900px">3.973</div>
<div class="cell" style="left:539px">2019-05-09 02:03:09</div>
<div class="cell" style="left:698.300px">151</div>
<div class="abs" style="left:785.100px;top:9.98px;width:3.200px;height:3.200px;border-radius:50%;background:#1f6a2b;box-shadow:0 0 1px #7fd08a"></div>
<div class="cell cj" style="left:792.300px;color:#636363;font-size:6.700px">正常</div>
<div class="cell lnk cj" style="left:891.900px">事件订阅</div>
<div class="cell dis cj" style="left:924px">远程控制</div>
<div class="cell lnk cj" style="left:956.600px">设备详情</div>
</div>
<div class="row alt" style="top:288.79px">
<div class="abs" style="left:5px;top:8.01px;width:7px;height:7px;border:1px solid #e3e6f0;background:#eceef5;border-radius:1px"></div>
<div class="cell" style="left:28.900px;font-size:6.700px">小天鹅20 BFUL265 鄱阳湖 20181208</div>
<div class="cell" style="left:285.800px">034570331</div>
<div class="cell" style="left:380.600px">HQNG4625S</div>
<svg class="abs" style="left:487px;top:9.21px" width="9.600" height="4.800" viewBox="0 0 9.600 4.800"><rect x=".4" y=".4" width="7.800" height="4" rx=".6" fill="#fff" stroke="#2fa84f" stroke-width=".8"/><rect x="1" y="1" width="6.600" height="2.800" fill="#8fd6a2" opacity="1"/><rect x="1" y="1" width="5.2" height="2.800" fill="#259a45"/><rect x="8.400" y="1.500" width="1" height="1.800" fill="#2fa84f"/></svg>
<div class="cell" style="left:502.900px">4.344</div>
<div class="cell" style="left:539px">2019-04-29 14:00:21</div>
<div class="cell" style="left:698.300px">142</div>
<div class="abs" style="left:785.100px;top:9.81px;width:3.200px;height:3.200px;border-radius:50%;background:#1f6a2b;box-shadow:0 0 1px #7fd08a"></div>
<div class="cell cj" style="left:792.300px;color:#636363;font-size:6.700px">正常</div>
<div class="cell lnk cj" style="left:891.900px">事件订阅</div>
<div class="cell dis cj" style="left:924px">远程控制</div>
<div class="cell lnk cj" style="left:956.600px">设备详情</div>
</div>
<div class="row" style="top:311.96px">
<div class="abs" style="left:5px;top:7.84px;width:7px;height:7px;border:1px solid #e3e6f0;background:#eceef5;border-radius:1px"></div>
<div class="cell" style="left:28.900px;font-size:6.700px">小天鹅21 BFUL266 鄱阳湖 20181208</div>
<div class="cell" style="left:285.800px">034571248</div>
<div class="cell" style="left:380.600px">HQNG4625S</div>
<svg class="abs" style="left:487px;top:9.04px" width="9.600" height="4.800" viewBox="0 0 9.600 4.800"><rect x=".4" y=".4" width="7.800" height="4" rx=".6" fill="#fff" stroke="#2fa84f" stroke-width=".8"/><rect x="1" y="1" width="6.600" height="2.800" fill="#8fd6a2" opacity="1"/><rect x="1" y="1" width="5.2" height="2.800" fill="#259a45"/><rect x="8.400" y="1.500" width="1" height="1.800" fill="#2fa84f"/></svg>
<div class="cell" style="left:502.900px">4.153</div>
<div class="cell" style="left:539px">2020-05-24 14:00:43</div>
<div class="cell" style="left:698.300px">680</div>
<div class="abs" style="left:785.100px;top:9.64px;width:3.200px;height:3.200px;border-radius:50%;background:#1f6a2b;box-shadow:0 0 1px #7fd08a"></div>
<div class="cell cj" style="left:792.300px;color:#636363;font-size:6.700px">正常</div>
<div class="cell lnk cj" style="left:891.900px">事件订阅</div>
<div class="cell dis cj" style="left:924px">远程控制</div>
<div class="cell lnk cj" style="left:956.600px">设备详情</div>
</div>
<div class="row alt" style="top:335.13px">
<div class="abs" style="left:5px;top:8.67px;width:7px;height:7px;border:1px solid #e3e6f0;background:#eceef5;border-radius:1px"></div>
<div class="cell" style="left:28.900px;font-size:6.700px">小天鹅22 BFUL267 鄱阳湖 20181208</div>
<div class="cell" style="left:285.800px">034600906</div>
<div class="cell" style="left:380.600px">HQNG4625S</div>
<svg class="abs" style="left:487px;top:9.87px" width="9.600" height="4.800" viewBox="0 0 9.600 4.800"><rect x=".4" y=".4" width="7.800" height="4" rx=".6" fill="#fff" stroke="#2fa84f" stroke-width=".8"/><rect x="1" y="1" width="6.600" height="2.800" fill="#8fd6a2" opacity="1"/><rect x="1" y="1" width="5.2" height="2.800" fill="#259a45"/><rect x="8.400" y="1.500" width="1" height="1.800" fill="#2fa84f"/></svg>
<div class="cell" style="left:502.900px">4.144</div>
<div class="cell" style="left:539px">2019-04-12 00:00:42</div>
<div class="cell" style="left:698.300px">124</div>
<div class="abs" style="left:785.100px;top:10.47px;width:3.200px;height:3.200px;border-radius:50%;background:#1f6a2b;box-shadow:0 0 1px #7fd08a"></div>
<div class="cell cj" style="left:792.300px;color:#636363;font-size:6.700px">正常</div>
<div class="cell lnk cj" style="left:891.900px">事件订阅</div>
<div class="cell dis cj" style="left:924px">远程控制</div>
<div class="cell lnk cj" style="left:956.600px">设备详情</div>
</div>
<div class="row" style="top:358.30px">
<div class="abs" style="left:5px;top:8.50px;width:7px;height:7px;border:1px solid #e3e6f0;background:#eceef5;border-radius:1px"></div>
<div class="cell" style="left:28.900px;font-size:6.700px">小天鹅16 BFUL253 鄱阳湖 20181208</div>
<div class="cell" style="left:285.800px">034601524</div>
<div class="cell" style="left:380.600px">HQNG4625S</div>
<svg class="abs" style="left:487px;top:9.70px" width="9.600" height="4.800" viewBox="0 0 9.600 4.800"><rect x=".4" y=".4" width="7.800" height="4" rx=".6" fill="#fff" stroke="#2fa84f" stroke-width=".8"/><rect x="1" y="1" width="6.600" height="2.800" fill="#8fd6a2" opacity="1"/><rect x="1" y="1" width="5.2" height="2.800" fill="#259a45"/><rect x="8.400" y="1.500" width="1" height="1.800" fill="#2fa84f"/></svg>
<div class="cell" style="left:502.900px">4.366</div>
<div class="cell" style="left:539px">2019-04-15 16:00:44</div>
<div class="cell" style="left:698.300px">128</div>
<div class="abs" style="left:785.100px;top:10.30px;width:3.200px;height:3.200px;border-radius:50%;background:#1f6a2b;box-shadow:0 0 1px #7fd08a"></div>
<div class="cell cj" style="left:792.300px;color:#636363;font-size:6.700px">正常</div>
<div class="cell lnk cj" style="left:891.900px">事件订阅</div>
<div class="cell dis cj" style="left:924px">远程控制</div>
<div class="cell lnk cj" style="left:956.600px">设备详情</div>
</div>
<div class="row alt" style="top:381.47px">
<div class="abs" style="left:5px;top:8.33px;width:7px;height:7px;border:1px solid #e3e6f0;background:#eceef5;border-radius:1px"></div>
<div class="cell" style="left:28.900px;font-size:6.700px">小天鹅13 BFUL248 鄱阳湖 20181208</div>
<div class="cell" style="left:285.800px">034601839</div>
<div class="cell" style="left:380.600px">HQNG4625S</div>
<svg class="abs" style="left:487px;top:9.53px" width="9.600" height="4.800" viewBox="0 0 9.600 4.800"><rect x=".4" y=".4" width="7.800" height="4" rx=".6" fill="#fff" stroke="#2fa84f" stroke-width=".8"/><rect x="1" y="1" width="6.600" height="2.800" fill="#8fd6a2" opacity="1"/><rect x="1" y="1" width="5.2" height="2.800" fill="#259a45"/><rect x="8.400" y="1.500" width="1" height="1.800" fill="#2fa84f"/></svg>
<div class="cell" style="left:502.900px">4.111</div>
<div class="cell" style="left:539px">2020-05-12 22:01:10</div>
<div class="cell" style="left:698.300px">521</div>
<div class="abs" style="left:785.100px;top:10.13px;width:3.200px;height:3.200px;border-radius:50%;background:#1f6a2b;box-shadow:0 0 1px #7fd08a"></div>
<div class="cell cj" style="left:792.300px;color:#636363;font-size:6.700px">正常</div>
<div class="cell lnk cj" style="left:891.900px">事件订阅</div>
<div class="cell dis cj" style="left:924px">远程控制</div>
<div class="cell lnk cj" style="left:956.600px">设备详情</div>
</div>
<div class="row" style="top:404.64px">
<div class="abs" style="left:5px;top:8.16px;width:7px;height:7px;border:1px solid #e3e6f0;background:#eceef5;border-radius:1px"></div>
<div class="cell" style="left:28.900px;font-size:6.700px">小天鹅17 BFUL256 鄱阳湖 20181208</div>
<div class="cell" style="left:285.800px">034609691</div>
<div class="cell" style="left:380.600px">HQNG4625S</div>
<svg class="abs" style="left:487px;top:9.36px" width="9.600" height="4.800" viewBox="0 0 9.600 4.800"><rect x=".4" y=".4" width="7.800" height="4" rx=".6" fill="#fff" stroke="#2fa84f" stroke-width=".8"/><rect x="1" y="1" width="6.600" height="2.800" fill="#8fd6a2" opacity="1"/><rect x="1" y="1" width="5.2" height="2.800" fill="#259a45"/><rect x="8.400" y="1.500" width="1" height="1.800" fill="#2fa84f"/></svg>
<div class="cell" style="left:502.900px">4.381</div>
<div class="cell" style="left:539px">2019-03-16 10:00:19</div>
<div class="cell" style="left:698.300px">96</div>
<div class="abs" style="left:785.100px;top:9.96px;width:3.200px;height:3.200px;border-radius:50%;background:#1f6a2b;box-shadow:0 0 1px #7fd08a"></div>
<div class="cell cj" style="left:792.300px;color:#636363;font-size:6.700px">正常</div>
<div class="cell lnk cj" style="left:891.900px">事件订阅</div>
<div class="cell dis cj" style="left:924px">远程控制</div>
<div class="cell lnk cj" style="left:956.600px">设备详情</div>
</div>
<div class="row alt" style="top:427.81px">
<div class="abs" style="left:5px;top:7.99px;width:7px;height:7px;border:1px solid #e3e6f0;background:#eceef5;border-radius:1px"></div>
<div class="cell" style="left:28.900px;font-size:6.700px">HQ144</div>
<div class="cell" style="left:285.800px">035740937</div>
<div class="cell" style="left:380.600px">HQAN40L</div>
<svg class="abs" style="left:487px;top:9.19px" width="9.600" height="4.800" viewBox="0 0 9.600 4.800"><rect x=".4" y=".4" width="7.800" height="4" rx=".6" fill="#fff" stroke="#e79999" stroke-width=".75"/><rect x="8.400" y="1.500" width="1" height="1.800" fill="#e58a8a"/></svg>
<div class="cell" style="left:502.900px">3.6</div>
<div class="cell" style="left:539px">2020-09-02 01:00:18</div>
<div class="cell" style="left:698.300px">412</div>
<div class="abs" style="left:785.100px;top:9.79px;width:3.200px;height:3.200px;border-radius:50%;background:#1f6a2b;box-shadow:0 0 1px #7fd08a"></div>
<div class="cell cj" style="left:792.300px;color:#636363;font-size:6.700px">正常</div>
<div class="cell lnk cj" style="left:891.900px">事件订阅</div>
<div class="cell dis cj" style="left:924px">远程控制</div>
<div class="cell lnk cj" style="left:956.600px">设备详情</div>
</div>
<div class="row" style="top:450.98px">
<div class="abs" style="left:5px;top:7.82px;width:7px;height:7px;border:1px solid #e3e6f0;background:#eceef5;border-radius:1px"></div>
<div class="cell" style="left:28.900px;font-size:6.700px">小天鹅10 HQP881 鄱阳湖 20181210</div>
<div class="cell" style="left:285.800px">036414981</div>
<div class="cell" style="left:380.600px">HQNG4625S</div>
<svg class="abs" style="left:487px;top:9.02px" width="9.600" height="4.800" viewBox="0 0 9.600 4.800"><rect x=".4" y=".4" width="7.800" height="4" rx=".6" fill="#fff" stroke="#e79999" stroke-width=".75"/><rect x="8.400" y="1.500" width="1" height="1.800" fill="#e58a8a"/></svg>
<div class="cell" style="left:502.900px">3.642</div>
<div class="cell" style="left:539px">2019-02-26 12:03:15</div>
<div class="cell" style="left:698.300px">78</div>
<div class="abs" style="left:785.100px;top:9.62px;width:3.200px;height:3.200px;border-radius:50%;background:#1f6a2b;box-shadow:0 0 1px #7fd08a"></div>
<div class="cell cj" style="left:792.300px;color:#636363;font-size:6.700px">正常</div>
<div class="cell lnk cj" style="left:891.900px">事件订阅</div>
<div class="cell dis cj" style="left:924px">远程控制</div>
<div class="cell lnk cj" style="left:956.600px">设备详情</div>
</div>
<div class="row alt" style="top:474.15px">
<div class="abs" style="left:5px;top:8.65px;width:7px;height:7px;border:1px solid #e3e6f0;background:#eceef5;border-radius:1px"></div>
<div class="cell" style="left:28.900px;font-size:6.700px">*TS CAF184 恒湖 18.12.15</div>
<div class="cell" style="left:285.800px">036503130</div>
<div class="cell" style="left:380.600px">HQBG3621S</div>
<svg class="abs" style="left:487px;top:9.85px" width="9.600" height="4.800" viewBox="0 0 9.600 4.800"><rect x=".4" y=".4" width="7.800" height="4" rx=".6" fill="#fff" stroke="#e79999" stroke-width=".75"/><rect x="8.400" y="1.500" width="1" height="1.800" fill="#e58a8a"/></svg>
<div class="cell" style="left:502.900px">3.62</div>
<div class="cell" style="left:539px">2019-11-15 22:03:14</div>
<div class="cell" style="left:698.300px">334</div>
<div class="abs" style="left:785.100px;top:10.45px;width:3.200px;height:3.200px;border-radius:50%;background:#1f6a2b;box-shadow:0 0 1px #7fd08a"></div>
<div class="cell cj" style="left:792.300px;color:#636363;font-size:6.700px">正常</div>
<div class="cell lnk cj" style="left:891.900px">事件订阅</div>
<div class="cell dis cj" style="left:924px">远程控制</div>
<div class="cell lnk cj" style="left:956.600px">设备详情</div>
</div>
<div class="row" style="top:497.32px">
<div class="abs" style="left:5px;top:8.48px;width:7px;height:7px;border:1px solid #e3e6f0;background:#eceef5;border-radius:1px"></div>
<div class="cell" style="left:28.900px;font-size:6.700px">小天鹅03 HQP856 鄱阳湖 20181210</div>
<div class="cell" style="left:285.800px">036507156</div>
<div class="cell" style="left:380.600px">HQNG4625S</div>
<svg class="abs" style="left:487px;top:9.68px" width="9.600" height="4.800" viewBox="0 0 9.600 4.800"><rect x=".4" y=".4" width="7.800" height="4" rx=".6" fill="#fff" stroke="#2fa84f" stroke-width=".8"/><rect x="1" y="1" width="6.600" height="2.800" fill="#8fd6a2" opacity="1"/><rect x="1" y="1" width="5.2" height="2.800" fill="#259a45"/><rect x="8.400" y="1.500" width="1" height="1.800" fill="#2fa84f"/></svg>
<div class="cell" style="left:502.900px">4.35</div>
<div class="cell" style="left:539px">2020-03-03 11:02:36</div>
<div class="cell" style="left:698.300px">449</div>
<div class="abs" style="left:785.100px;top:10.28px;width:3.200px;height:3.200px;border-radius:50%;background:#1f6a2b;box-shadow:0 0 1px #7fd08a"></div>
<div class="cell cj" style="left:792.300px;color:#636363;font-size:6.700px">正常</div>
<div class="cell lnk cj" style="left:891.900px">事件订阅</div>
<div class="cell dis cj" style="left:924px">远程控制</div>
<div class="cell lnk cj" style="left:956.600px">设备详情</div>
</div>
<div class="row alt" style="top:520.49px">
<div class="abs" style="left:5px;top:8.31px;width:7px;height:7px;border:1px solid #e3e6f0;background:#eceef5;border-radius:1px"></div>
<div class="cell" style="left:28.900px;font-size:6.700px">小天鹅04 HQP865 鄱阳湖 20181210</div>
<div class="cell" style="left:285.800px">036508386</div>
<div class="cell" style="left:380.600px">HQNG4625S</div>
<svg class="abs" style="left:487px;top:9.51px" width="9.600" height="4.800" viewBox="0 0 9.600 4.800"><rect x=".4" y=".4" width="7.800" height="4" rx=".6" fill="#fff" stroke="#2fa84f" stroke-width=".8"/><rect x="1" y="1" width="6.600" height="2.800" fill="#8fd6a2" opacity=".6"/><rect x="1" y="1" width="4.6" height="2.800" fill="#259a45"/><rect x="8.400" y="1.500" width="1" height="1.800" fill="#2fa84f"/></svg>
<div class="cell" style="left:502.900px">4.11</div>
<div class="cell" style="left:539px">2019-03-31 12:03:24</div>
<div class="cell" style="left:698.300px">169</div>
<div class="abs" style="left:785.100px;top:10.11px;width:3.200px;height:3.200px;border-radius:50%;background:#1f6a2b;box-shadow:0 0 1px #7fd08a"></div>
<div class="cell cj" style="left:792.300px;color:#636363;font-size:6.700px">正常</div>
<div class="cell lnk cj" style="left:891.900px">事件订阅</div>
<div class="cell dis cj" style="left:924px">远程控制</div>
<div class="cell lnk cj" style="left:956.600px">设备详情</div>
</div>
<div class="row" style="top:543.66px;border-bottom:none;height:23.3px">
<div class="abs" style="left:5px;top:8.14px;width:7px;height:7px;border:1px solid #e3e6f0;background:#eceef5;border-radius:1px"></div>
<div class="cell" style="left:28.900px;font-size:6.700px">*TS CAF186 恒湖 18.12.15</div>
<div class="cell" style="left:285.800px">036511273</div>
<div class="cell" style="left:380.600px">HQBG3621S</div>
<svg class="abs" style="left:487px;top:9.34px" width="9.600" height="4.800" viewBox="0 0 9.600 4.800"><rect x=".4" y=".4" width="7.800" height="4" rx=".6" fill="#fff" stroke="#2fa84f" stroke-width=".8"/><rect x="1" y="1" width="6.600" height="2.800" fill="#8fd6a2" opacity="0"/><rect x="1" y="1" width="3.2" height="2.800" fill="#259a45"/><rect x="8.400" y="1.500" width="1" height="1.800" fill="#2fa84f"/></svg>
<div class="cell" style="left:502.900px">3.855</div>
<div class="cell" style="left:539px">2019-06-10 12:03:14</div>
<div class="cell" style="left:698.300px">176</div>
<div class="abs" style="left:785.100px;top:9.94px;width:3.200px;height:3.200px;border-radius:50%;background:#1f6a2b;box-shadow:0 0 1px #7fd08a"></div>
<div class="cell cj" style="left:792.300px;color:#636363;font-size:6.700px">正常</div>
<div class="cell lnk cj" style="left:891.900px">事件订阅</div>
<div class="cell dis cj" style="left:924px">远程控制</div>
<div class="cell lnk cj" style="left:956.600px">设备详情</div>
</div>
<div class="vl" style="left:223.9px;top:102px;height:465px"></div>
<div class="vl" style="left:480.4px;top:102px;height:465px"></div>
<div class="vl" style="left:574.3px;top:102px;height:465px"></div>
<div class="vl" style="left:681.3px;top:102px;height:465px"></div>
<div class="vl" style="left:734.3px;top:102px;height:465px"></div>
<div class="vl" style="left:892.9px;top:102px;height:465px"></div>
<div class="vl" style="left:977.3px;top:102px;height:465px"></div>
<div class="vl" style="left:1083.4px;top:102px;height:465px"></div>
<div class="vl" style="left:200px;top:103px;height:464px;background:#f4f4f4"></div>
<div class="vl" style="left:1201.600px;top:126px;height:441px;background:#f4f4f4"></div>
<div class="abs" style="left:1202.600px;top:127.500px;width:3px;height:165px;background:#bdbdbd;border-radius:1.500px"></div>
<div class="vl" style="left:1206.200px;top:100px;height:467px;background:#f3f3f3"></div>
<div class="t" style="left:983.300px;top:578.650px;font-size:6.600px;color:#555">共 123 条</div>
<div class="pg" style="left:1015.100px;width:15.200px;color:#d2d2d2">&lt;</div>
<div class="pg" style="left:1034px;width:15.200px;border-color:#8fb6ea;color:#4f80c8">1</div>
<div class="pg" style="left:1053px;width:15.200px">2</div>
<div class="pg" style="left:1072px;width:15.200px">3</div>
<div class="pg" style="left:1091px;width:15px">&gt;</div>
<div class="pg" style="left:1114.200px;width:40.800px;text-align:left;padding-left:5px;line-height:15px">50 条/页<svg style="position:absolute;right:3.500px;top:4.400px" width="4" height="3" viewBox="0 0 4 3" fill="none" stroke="#c0c0c0" stroke-width=".6"><path d="M.3.500L2 2.300 3.700.5"/></svg></div>
<div class="t" style="left:1159.400px;top:578.650px;font-size:6.600px;color:#555">跳至</div>
<div class="pg" style="left:1176.500px;width:23.600px"></div>
<div class="t" style="left:1204px;top:578.650px;font-size:6.600px;color:#555">页</div>
<div class="abs" style="left:1px;top:1px;width:1214px;height:1px;background:#d0d0d0"></div>
<div class="abs" style="left:1px;top:1px;width:1px;height:595px;background:#c4c4c4"></div>
<div class="abs" style="left:1214px;top:1px;width:1px;height:595px;background:#c4c4c4"></div>
<div class="abs" style="left:1px;top:595px;width:1214px;height:1px;background:#c4c4c4"></div>
<div class="abs" style="left:0;top:596px;width:1216px;height:2px;background:#fff"></div>
<div class="abs" style="left:1215px;top:0;width:1px;height:598px;background:#fff"></div>
</body></html>
